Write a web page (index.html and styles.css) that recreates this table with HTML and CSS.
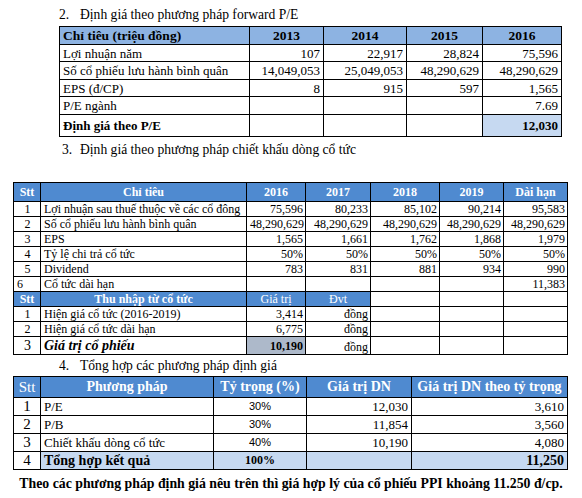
FILE: index.html
```html
<!DOCTYPE html>
<html lang="vi">
<head>
<meta charset="utf-8">
<link rel="stylesheet" href="styles.css">
</head>
<body>
<div class="page">
  <div class="heading h2"><span class="num">2.</span><span>Định giá theo phương pháp forward P/E</span></div>
  <table class="t1">
    <colgroup><col class="c1a"><col class="c1b"><col class="c1c"><col class="c1d"><col class="c1e"></colgroup>
    <tr class="hd"><th class="left">Chỉ tiêu (triệu đồng)</th><th>2013</th><th>2014</th><th>2015</th><th>2016</th></tr>
    <tr class="r1"><td>Lợi nhuận năm</td><td class="n">107</td><td class="n">22,917</td><td class="n">28,824</td><td class="n">75,596</td></tr>
    <tr class="r2"><td>Số cổ phiếu lưu hành bình quân</td><td class="n">14,049,053</td><td class="n">25,049,053</td><td class="n">48,290,629</td><td class="n">48,290,629</td></tr>
    <tr class="r1"><td>EPS (đ/CP)</td><td class="n">8</td><td class="n">915</td><td class="n">597</td><td class="n">1,565</td></tr>
    <tr class="r2"><td>P/E ngành</td><td></td><td></td><td></td><td class="n">7.69</td></tr>
    <tr class="rl"><td class="b">Định giá theo P/E</td><td></td><td></td><td></td><td class="n b lb">12,030</td></tr>
  </table>

  <div class="heading h3"><span class="num">3.</span><span>Định giá theo phương pháp chiết khấu dòng cổ tức</span></div>
  <table class="t2">
    <colgroup><col class="c2a"><col class="c2b"><col class="c2c"><col class="c2d"><col class="c2e"><col class="c2f"><col class="c2g"></colgroup>
    <tr class="hd"><th>Stt</th><th>Chỉ tiêu</th><th>2016</th><th>2017</th><th>2018</th><th>2019</th><th>Dài hạn</th></tr>
    <tr><td class="c">1</td><td>Lợi nhuận sau thuế thuộc về các cổ đông</td><td class="n">75,596</td><td class="n">80,233</td><td class="n">85,102</td><td class="n">90,214</td><td class="n">95,583</td></tr>
    <tr><td class="c">2</td><td>Số cổ phiếu lưu hành bình quân</td><td class="n">48,290,629</td><td class="n">48,290,629</td><td class="n">48,290,629</td><td class="n">48,290,629</td><td class="n">48,290,629</td></tr>
    <tr><td class="c">3</td><td>EPS</td><td class="n">1,565</td><td class="n">1,661</td><td class="n">1,762</td><td class="n">1,868</td><td class="n">1,979</td></tr>
    <tr><td class="c">4</td><td>Tỷ lệ chi trả cổ tức</td><td class="n">50%</td><td class="n">50%</td><td class="n">50%</td><td class="n">50%</td><td class="n">50%</td></tr>
    <tr><td class="c">5</td><td>Dividend</td><td class="n">783</td><td class="n">831</td><td class="n">881</td><td class="n">934</td><td class="n">990</td></tr>
    <tr><td>6</td><td>Cổ tức dài hạn</td><td></td><td></td><td></td><td></td><td class="n">11,383</td></tr>
    <tr class="hd2"><th>Stt</th><th>Thu nhập từ cổ tức</th><th class="nb">Giá trị</th><th class="nb">Đvt</th><td></td><td></td><td></td></tr>
    <tr><td class="c">1</td><td>Hiện giá cổ tức (2016-2019)</td><td class="n">3,414</td><td class="n">đồng</td><td></td><td></td><td></td></tr>
    <tr><td class="c">2</td><td>Hiện giá cổ tức dài hạn</td><td class="n">6,775</td><td class="n">đồng</td><td></td><td></td><td></td></tr>
    <tr class="rl2"><td class="c big">3</td><td class="bi">Giá trị cổ phiếu</td><td class="n b gb">10,190</td><td class="n bot">đồng</td><td></td><td></td><td></td></tr>
  </table>

  <div class="heading h4"><span class="num">4.</span><span>Tổng hợp các phương pháp định giá</span></div>
  <table class="t3">
    <colgroup><col class="c3a"><col class="c3b"><col class="c3c"><col class="c3d"><col class="c3e"></colgroup>
    <tr class="hd3"><th class="nb">Stt</th><th>Phương pháp</th><th>Tỷ trọng (%)</th><th>Giá trị DN</th><th>Giá trị DN theo tỷ trọng</th></tr>
    <tr><td class="c big">1</td><td>P/E</td><td class="pct">30%</td><td class="n">12,030</td><td class="n">3,610</td></tr>
    <tr><td class="c big">2</td><td>P/B</td><td class="pct">30%</td><td class="n">11,854</td><td class="n">3,560</td></tr>
    <tr><td class="c big">3</td><td>Chiết khấu dòng cổ tức</td><td class="pct">40%</td><td class="n">10,190</td><td class="n">4,080</td></tr>
    <tr class="tot"><td class="c big">4</td><td class="b lb tb">Tổng hợp kết quả</td><td class="c b lb pb">100%</td><td class="lb"></td><td class="n b lb tb">11,250</td></tr>
  </table>

  <p class="concl">Theo các phương pháp định giá nêu trên thì giá hợp lý của cổ phiếu PPI khoảng 11.250 đ/cp.</p>
</div>
</body>
</html>
```

FILE: styles.css
```css
html, body {
  margin: 0;
  padding: 0;
  background: #ffffff;
}
body, table, td, th, p, div, span {
  font-family: "Liberation Serif", "Times New Roman", serif;
  color: #000;
}
.page {
  width: 582px;
  height: 498px;
  overflow: hidden;
}
.heading {
  display: flex;
  font-size: 13.6px;
  line-height: 16px;
}
.heading .num {
  width: 21px;
}
.h2 {
  padding: 7px 0 0 59px;
  height: 19px;
}
.h3 {
  padding: 5px 0 0 62px;
  height: 40px;
}
.h3 .num { width: 18px; }
.h4 {
  padding: 3px 0 0 59px;
  height: 18px;
}
table {
  border-collapse: collapse;
  table-layout: fixed;
}
td, th {
  border: 1px solid #000;
  padding: 0 3px;
  white-space: nowrap;
  overflow: hidden;
}
.t1 {
  margin-left: 59px;
  width: 502px;
  font-size: 13px;
}
.c1a { width: 190px; }
.c1b { width: 74px; }
.c1c { width: 83px; }
.c1d { width: 76px; }
.c1e { width: 79px; }
.t1 td, .t1 th { line-height: 15px; }
.t1 .hd th {
  background: #8db3e2;
  font-weight: bold;
  height: 17px;
  text-align: center;
  font-size: 13.5px;
}
.t1 .hd th.left { text-align: left; }
.t1 .r1 td { height: 16px; }
.t1 .r2 td { height: 17px; }
.t1 .rl td { height: 21px; }
.n { text-align: right; }
.c { text-align: center; }
.b { font-weight: bold; }
.lb { background: #c6d9f1; }
.gb { background: #adb9ca; }

.t2 {
  margin-left: 13px;
  width: 554px;
  font-size: 12px;
}
.c2a { width: 27px; }
.c2b { width: 206px; }
.c2c { width: 59px; }
.c2d { width: 65px; }
.c2e { width: 69px; }
.c2f { width: 64px; }
.c2g { width: 64px; }
.t2 td { height: 14px; line-height: 14px; padding: 0 2px 0 3px; }
.t2 .hd th {
  background: #4f8ad0;
  color: #fff;
  height: 18px;
  text-align: center;
  font-weight: bold;
}
.t2 .hd2 th {
  background: #4f8ad0;
  color: #fff;
  height: 14px;
  line-height: 14px;
  text-align: center;
  font-weight: bold;
}
.t2 .hd2 th.nb { font-weight: normal; }
.t2 .rl2 td { height: 17px; }
.big { font-size: 14px; }
.bi {
  font-weight: bold;
  font-style: italic;
  font-size: 14px;
}
.bot { vertical-align: bottom; }

.t3 {
  margin-left: 13px;
  width: 554px;
  font-size: 13px;
}
.c3a { width: 27px; }
.c3b { width: 173px; }
.c3c { width: 93px; }
.c3d { width: 105px; }
.c3e { width: 156px; }
.t3 .hd3 th {
  background: #4f8ad0;
  color: #fff;
  height: 20px;
  text-align: center;
  font-weight: bold;
  font-size: 14px;
}
.t3 .hd3 th.nb { font-weight: normal; font-size: 15px; }
.t3 td { height: 17px; line-height: 17px; }
.t3 .big { font-size: 15px; }
.t3 td.pct {
  text-align: center;
  font-family: "Liberation Sans", Arial, sans-serif;
  font-size: 11px;
}
.tb { font-size: 14px; }
.pb { font-size: 12px; }
.concl {
  margin: 5px 0 0;
  text-align: center;
  font-weight: bold;
  font-size: 13.8px;
  line-height: 18px;
  white-space: nowrap;
}
```
